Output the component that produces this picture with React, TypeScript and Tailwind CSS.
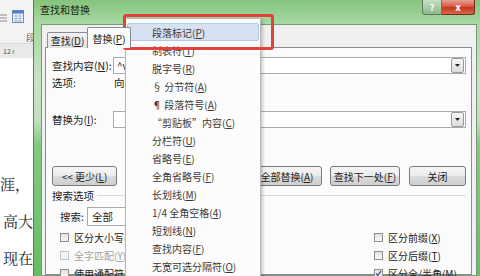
import React from 'react'

type Item = { label: string; key: string; active?: boolean }

const menuItems: Item[] = [
    { label: '段落标记', key: 'P', active: true },
    { label: '制表符', key: 'T' },
    { label: '脱字号', key: 'R' },
    { label: '§ 分节符', key: 'A' },
    { label: '¶ 段落符号', key: 'A' },
    { label: '“剪贴板”内容', key: 'C' },
    { label: '分栏符', key: 'U' },
    { label: '省略号', key: 'E' },
    { label: '全角省略号', key: 'F' },
    { label: '长划线', key: 'M' },
    { label: '1/4 全角空格', key: '4' },
    { label: '短划线', key: 'N' },
    { label: '查找内容', key: 'F' },
    { label: '无宽可选分隔符', key: 'O' },
]

function Acc({ k }: { k: string }) {
    return <>(<span className="underline underline-offset-1">{k}</span>)</>
}

function WordSide() {
    return (
        <div className="w-[33px] shrink-0 flex flex-col bg-white overflow-hidden">
            <div className="h-[48px] bg-[#f3f3f3] border-b border-[#dadada] flex flex-col">
                <div className="flex items-center gap-[4px] pt-[10px]">
                    <svg width="8" height="8" viewBox="0 0 8 8" className="mt-[2px]">
                        <path d="M0 1h7M0 4h7M0 7h7" stroke="#8a8a8a" strokeWidth="1" />
                    </svg>
                    <svg width="12" height="13" viewBox="0 0 12 13">
                        <rect x="0.5" y="0.5" width="11" height="12" fill="#eef3f9" stroke="#6f8fb8" />
                        <rect x="0.5" y="0.5" width="11" height="3" fill="#4f7fc0" />
                        <path d="M2 6h8M2 8.5h8M2 11h8M4 4v8M8 4v8" stroke="#9bb3d3" strokeWidth="0.8" />
                    </svg>
                </div>
                <div className="pl-[26px] pt-[10px] text-[9px] leading-[10px] text-[#666]">段</div>
            </div>
            <div className="h-[14px] bg-[#e9e9e9] text-[7px] leading-[14px] text-[#555] pl-[3px] whitespace-nowrap">12 ı</div>
            <div className="flex-1 pt-[107px] text-[15px] leading-[37px] text-[#1e1e1e] font-['Noto_Serif_CJK_SC','Noto_Sans_CJK_SC',serif] whitespace-nowrap">
                <div>涯，</div>
                <div className="pl-[3px]">高大</div>
                <div className="pl-[3px]">现在</div>
            </div>
        </div>
    )
}

function DropArrow() {
    return (
        <div className="w-[13px] h-[15px] mr-[1px] border border-[#9a9a9a] rounded-[2px] bg-[linear-gradient(180deg,#f7f7f7,#dcdcdc)] flex items-center justify-center">
            <svg width="5" height="3" viewBox="0 0 5 3"><path d="M0 0h5L2.5 3z" fill="#222" /></svg>
        </div>
    )
}

function Btn({ children, w }: { children: React.ReactNode; w: string }) {
    return (
        <div className={`${w} h-[20px] shrink-0 border border-[#7a7a7a] rounded-[3px] bg-[linear-gradient(180deg,#f6f6f6_0%,#ebebeb_50%,#dcdcdc_51%,#cfcfcf_100%)] flex items-center justify-center text-[10px] text-[#222] whitespace-nowrap`}>
            {children}
        </div>
    )
}

function Check({ label, k, checked, disabled }: { label: string; k: string; checked?: boolean; disabled?: boolean }) {
    return (
        <div className="h-[18px] flex items-center gap-[5px] whitespace-nowrap">
            <div className={`w-[9px] h-[9px] border ${disabled ? 'border-[#c4c4c4] bg-[#f4f4f4]' : 'border-[#8e8f8f] bg-[linear-gradient(180deg,#e2e2e2,#f8f8f8)]'} flex items-center justify-center`}>
                {checked && (
                    <svg width="7" height="7" viewBox="0 0 7 7"><path d="M1 3.5l1.8 2L6 1" stroke="#3d5a8f" strokeWidth="1.3" fill="none" /></svg>
                )}
            </div>
            <span className={`text-[10px] ${disabled ? 'text-[#a3a3a3]' : 'text-[#222]'}`}>{label}<Acc k={k} /></span>
        </div>
    )
}

function Dialog() {
    return (
        <div className="flex-1 flex flex-col border-l border-[#5e775e] bg-[linear-gradient(180deg,#84c47d_0%,#a7d8a0_8%,#c9e4c5_30%,#bfe0ba_44%,#84ca81_52%,#66bd64_100%)]">
            <div className="h-[24px] shrink-0 flex items-start">
                <span className="pl-[6px] pt-[3px] text-[10px] leading-[13px] text-[#15240f]">查找和替换</span>
                <div className="ml-auto mr-[5px] flex">
                    <div className="w-[20px] h-[15px] rounded-bl-[3px] border border-t-0 border-[#5e7d5e] bg-[linear-gradient(180deg,#c6dfc3,#8fb68c)] flex items-center justify-center text-[9px] font-bold text-white leading-none">?</div>
                    <div className="w-[33px] h-[15px] rounded-br-[3px] border border-t-0 border-l-0 border-[#7a2a20] bg-[linear-gradient(180deg,#e9a192_0%,#d45a45_45%,#c2371f_55%,#d86a4e_100%)] flex items-center justify-center text-[10px] font-bold text-white leading-none">x</div>
                </div>
            </div>
            <div className="flex-1 flex pl-[7px] pr-[3px] min-h-0">
                <div className="flex-1 bg-[#f0f0f0] border border-[#7b977b] pl-[3px] pr-[4px] pt-[3px] flex flex-col min-h-0">
                    <div className="h-[20px] shrink-0 flex items-end pl-[2px] relative z-10 -mb-[1px]">
                        <div className="w-[41px] h-[16px] border border-b-0 border-[#898c95] rounded-t-[2px] bg-[linear-gradient(180deg,#f2f2f2,#e1e1e1)] flex items-center justify-center text-[10px] text-[#222]">
                            查找<Acc k="D" />
                        </div>
                        <div className="w-[44px] h-[21px] -ml-[1px] border border-b-0 border-[#898c95] rounded-t-[2px] bg-[#fbfbfb] flex items-center justify-center text-[10px] text-[#222]">
                            替换<Acc k="P" />
                        </div>
                    </div>
                    <div className="flex-1 border border-[#898c95] bg-[#fbfbfb] pl-[6px] pr-[5px] pt-[9px] flex flex-col text-[10.5px] text-[#222] min-h-0">
                        <div className="h-[17px] flex items-center">
                            <span className="w-[61px] shrink-0 whitespace-nowrap">查找内容<Acc k="N" />:</span>
                            <div className="flex-1 h-[17px] border border-[#a9abb2] bg-white flex items-center justify-between pl-[3px]">
                                <span className="text-[10px]">^v</span>
                                <DropArrow />
                            </div>
                        </div>
                        <div className="mt-[2px] h-[13px] flex items-center">
                            <span className="w-[62px] shrink-0">选项:</span>
                            <span>向下</span>
                        </div>
                        <div className="mt-[22px] h-[17px] flex items-center">
                            <span className="w-[61px] shrink-0 whitespace-nowrap">替换为<Acc k="I" />:</span>
                            <div className="flex-1 h-[17px] border border-[#a9abb2] bg-white flex items-center justify-end">
                                <DropArrow />
                            </div>
                        </div>
                        <div className="mt-[38px] flex items-center">
                            <Btn w="w-[65px]">&lt;&lt; 更少<Acc k="L" /></Btn>
                            <div className="flex-1" />
                            <div className="flex gap-[8px]">
                                <Btn w="w-[70px]">替换<Acc k="R" /></Btn>
                                <Btn w="w-[70px]">全部替换<Acc k="A" /></Btn>
                                <Btn w="w-[70px]">查找下一处<Acc k="F" /></Btn>
                            </div>
                            <div className="w-[9px]" />
                            <Btn w="w-[57px]">关闭</Btn>
                        </div>
                        <div className="mt-[3px] h-[13px] flex items-center gap-[3px]">
                            <span className="whitespace-nowrap">搜索选项</span>
                            <div className="flex-1 h-px bg-[#dcdcdc]" />
                        </div>
                        <div className="mt-[5px] h-[19px] pl-[8px] flex items-center">
                            <span className="w-[27px] shrink-0">搜索:</span>
                            <div className="w-[80px] h-[19px] border border-[#a9abb2] bg-white flex items-center pl-[4px]">全部</div>
                        </div>
                        <div className="mt-[2px] pl-[8px] flex">
                            <div className="flex-1 flex flex-col">
                                <Check label="区分大小写" k="H" />
                                <Check label="全字匹配" k="Y" disabled />
                                <Check label="使用通配符" k="U" />
                            </div>
                            <div className="w-[92px] flex flex-col">
                                <Check label="区分前缀" k="X" />
                                <Check label="区分后缀" k="T" />
                                <Check label="区分全/半角" k="M" checked />
                            </div>
                        </div>
                    </div>
                </div>
            </div>
        </div>
    )
}

function SpecialMenu() {
    return (
        <div className="absolute left-[125px] top-[18px] w-[136px] h-[270px] bg-[#fcfcfc] border border-[#b7b7b7] shadow-[2px_2px_3px_rgba(0,0,0,0.2)] pt-[4px] px-[1px]">
            {menuItems.map((item, i) => (
                <div
                    key={i}
                    className={`h-[18px] flex items-center pl-[24px] border rounded-[2px] text-[10px] text-[#3a3a3a] whitespace-nowrap ${item.active ? 'bg-[#d6e1f2] border-[#b3c8e9]' : 'border-transparent'}`}
                >
                    {item.label}<Acc k={item.key} />
                </div>
            ))}
        </div>
    )
}

export default function App() {
    return (
        <div className="w-[480px] h-[276px] overflow-hidden relative flex bg-white font-['Noto_Sans_CJK_SC',sans-serif]">
            <WordSide />
            <Dialog />
            <SpecialMenu />
            <div className="absolute left-[123px] top-[14px] w-[151px] h-[36px] border-[3px] border-[#e2413c] rounded-[3px]" />
        </div>
    )
}
